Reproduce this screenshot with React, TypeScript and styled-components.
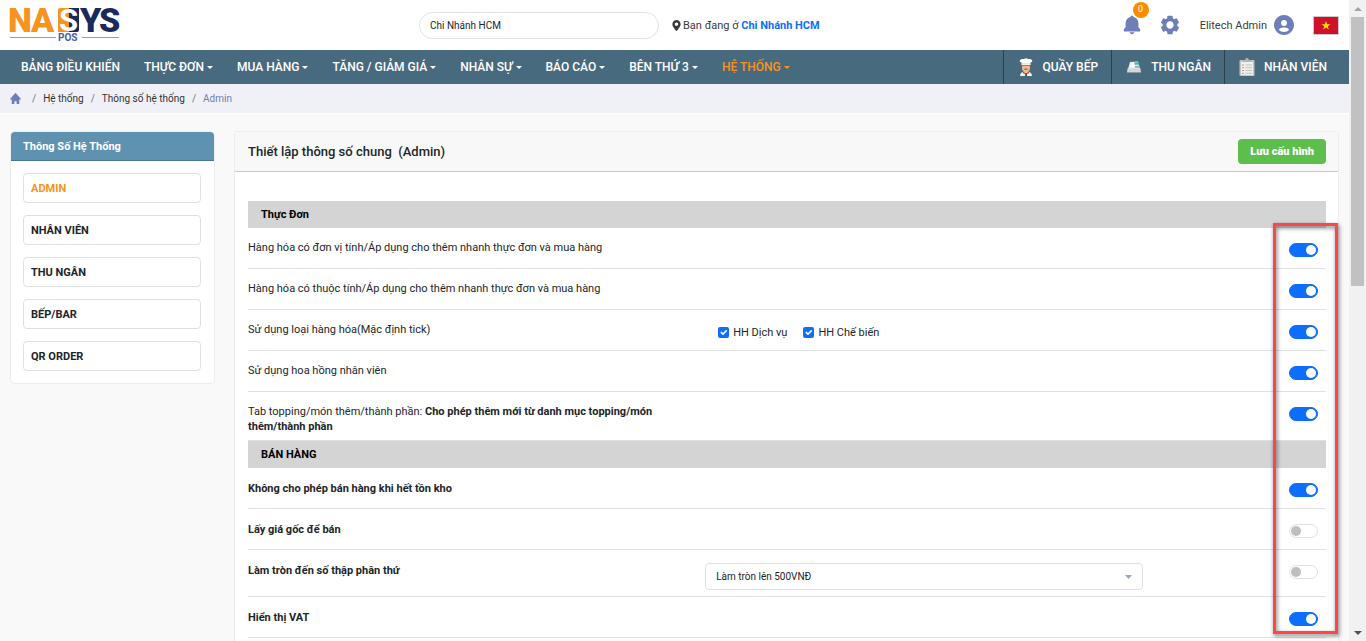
import React from "react";
import styled, { createGlobalStyle } from "styled-components";
import { BiSolidBell, BiSolidCog, BiSolidUserCircle, BiSolidHome } from "react-icons/bi";
import { FaMapMarkerAlt } from "react-icons/fa";

const ORANGE = "#f7931e";
const LINE = "#dee2e6";

const GlobalStyle = createGlobalStyle`
  *, *::before, *::after { box-sizing: border-box; }
  html, body { margin: 0; height: 100%; overflow: hidden; }
  body {
    font-family: Roboto, "Noto Sans", sans-serif;
    font-size: 11px;
    line-height: 15px;
    color: #212529;
    background: #f9f9f9;
  }
  input, select, button { font-family: inherit; color: inherit; margin: 0; }
  a { color: inherit; text-decoration: none; }
  svg { display: block; flex: none; }
`;

const Screen = styled.div`
  display: grid;
  grid-template-columns: minmax(0, 1fr) 17px;
  height: 100vh;
`;

const Page = styled.div`
  display: flex;
  flex-direction: column;
  min-width: 0;
  overflow: hidden;
`;

/* top bar */
const TopBar = styled.header`
  display: grid;
  grid-template-columns: 419px 240px 1fr auto;
  align-items: center;
  height: 50px;
  flex: none;
  padding-right: 10px;
  background: #fff;
`;

const LogoLink = styled.a`
  padding-left: 9px;
`;

const BranchInput = styled.input`
  width: 100%;
  height: 27px;
  padding: 0 10px;
  border: 1px solid ${LINE};
  border-radius: 14px;
  background: #fff;
  font-size: 10px;
  outline: none;
`;

const Location = styled.p`
  display: flex;
  align-items: center;
  gap: 1px;
  margin: 0 0 0 12px;
  color: #3b3b3b;
  strong { color: #0d6efd; }
`;

const Tools = styled.div`
  display: flex;
  align-items: center;
  color: #6d7fb6;
`;

const IconButton = styled.button`
  position: relative;
  display: flex;
  padding: 0;
  margin-right: 16px;
  border: 0;
  background: none;
  color: #6d7fb6;
`;

const Badge = styled.span`
  position: absolute;
  top: -12px;
  right: -6px;
  width: 16px;
  height: 16px;
  border-radius: 50%;
  background: #ff8c00;
  color: #fff;
  font-size: 9px;
  line-height: 15px;
  text-align: center;
`;

const Account = styled.button`
  display: flex;
  align-items: center;
  gap: 5px;
  padding: 0;
  margin: 0 17px 0 3px;
  border: 0;
  background: none;
  font-size: 11px;
  color: #3b3b3b;
  svg { color: #6d7fb6; }
`;

/* navigation */
const Nav = styled.nav`
  display: flex;
  justify-content: space-between;
  height: 34px;
  flex: none;
  background: #486a7f;
  color: #fff;
  font-size: 12px;
  font-weight: 500;
`;

const Menu = styled.div`
  display: flex;
  padding-left: 9px;
`;

const MenuLink = styled.a<{ $active?: boolean }>`
  display: flex;
  align-items: center;
  gap: 3px;
  padding: 0 12px;
  color: ${(p) => (p.$active ? ORANGE : "#fff")};
`;

const Caret = styled.span`
  border: 3px solid transparent;
  border-top-color: currentColor;
  border-bottom: 0;
`;

const Stations = styled.div`
  display: flex;
`;

const Station = styled.a`
  display: flex;
  align-items: center;
  gap: 8px;
  padding: 0 13px;
  border-left: 1px solid #2f3f49;
  &:last-child { padding-right: 22px; }
`;

const Crumbs = styled.ol`
  display: flex;
  align-items: center;
  height: 30px;
  flex: none;
  margin: 0;
  padding: 0 9px;
  list-style: none;
  background: #f0f1f6;
  border-bottom: 1px solid #fff;
  font-size: 10px;
  color: #333;
  li + li::before { content: "/"; padding: 0 7px; color: #6c757d; }
  li:nth-child(2)::before { padding-left: 10px; }
  li:first-child, li:last-child { color: #6d7fb6; }
`;

/* body */
const Body = styled.div`
  display: grid;
  grid-template-columns: 205px minmax(0, 1fr);
  gap: 19px;
  flex: 1;
  padding: 17px 10px 0;
  align-items: stretch;
`;

const SideCard = styled.aside`
  align-self: start;
  border: 1px solid #ececec;
  border-radius: 5px;
  background: #fff;
`;

const SideTitle = styled.h2`
  margin: 0;
  height: 29px;
  padding: 0 12px;
  border-bottom: 1px solid #48758f;
  border-radius: 4px 4px 0 0;
  background: #5f91b1;
  color: #fff;
  font-size: 11px;
  line-height: 29px;
`;

const SideList = styled.div`
  display: grid;
  gap: 12px;
  padding: 12px 13px 12px 12px;
`;

const SideLink = styled.a<{ $active?: boolean }>`
  height: 30px;
  padding: 0 7px;
  border: 1px solid ${LINE};
  border-radius: 4px;
  font-weight: 700;
  line-height: 29px;
  color: ${(p) => (p.$active ? ORANGE : "#212529")};
`;

const Card = styled.main`
  border: 1px solid #ececec;
  border-bottom: 0;
  border-radius: 4px 4px 0 0;
  background: #fff;
`;

const CardHead = styled.div`
  display: flex;
  align-items: center;
  justify-content: space-between;
  height: 40px;
  padding: 0 12px 0 13px;
  border-bottom: 1px solid #c8c8c8;
  background: #f8f8f8;
`;

const CardTitle = styled.h1`
  margin: 0;
  font-size: 13px;
  font-weight: 500;
  white-space: pre;
`;

const SaveButton = styled.button`
  height: 25px;
  padding: 0 12px;
  border: 0;
  border-radius: 4px;
  background: #5cbf4c;
  color: #fff;
  font-size: 11px;
  font-weight: 900;
`;

const Settings = styled.div`
  position: relative;
  margin: 29px 12px 0 13px;
`;

const Section = styled.h3`
  margin: 0;
  height: 27px;
  padding: 0 13px;
  background: #d4d4d4;
  color: #000;
  font-size: 11px;
  line-height: 27px;
`;

const Row = styled.div`
  display: grid;
  grid-template-columns: 5fr 5fr 2fr;
  align-items: start;
  min-height: 41px;
  border-bottom: 1px solid ${LINE};
`;

const RowLabel = styled.div<{ $bold?: boolean }>`
  padding: ${(p) => (p.$bold ? 13 : 12)}px 8px 6px 0;
  font-weight: ${(p) => (p.$bold ? 700 : 400)};
`;

const RowExtra = styled.div`
  padding: 13px 3px 6px 8px;
`;

const Checks = styled.div`
  display: flex;
  gap: 16px;
  padding: 2px 13px 0;
  label { display: flex; align-items: center; gap: 4px; }
`;

const CheckBox = styled.input`
  appearance: none;
  width: 11px;
  height: 11px;
  border-radius: 2px;
  border: 1px solid #bfbfbf;
  &:checked {
    border: 0;
    background: #0d6efd
      url("data:image/svg+xml,%3csvg xmlns='http://www.w3.org/2000/svg' viewBox='0 0 20 20'%3e%3cpath fill='none' stroke='%23fff' stroke-linecap='round' stroke-linejoin='round' stroke-width='3' d='m6 10 3 3 6-6'/%3e%3c/svg%3e");
  }
`;

const SelectWrap = styled.div`
  display: grid;
  align-items: center;
  select, svg { grid-area: 1 / 1; }
  svg { justify-self: end; margin-right: 11px; pointer-events: none; }
`;

const Select = styled.select`
  appearance: none;
  width: 100%;
  height: 27px;
  padding: 0 10px;
  border: 1px solid ${LINE};
  border-radius: 4px;
  background: #fff;
  font-size: 10px;
`;

const Switch = styled.input`
  appearance: none;
  display: flex;
  align-items: center;
  justify-self: end;
  width: 29px;
  height: 14px;
  margin: 15px 8px 0 0;
  padding: 0 1px;
  border: 1px solid ${LINE};
  border-radius: 7px;
  background: #fff;
  &::before {
    content: "";
    width: 10px;
    height: 10px;
    border-radius: 50%;
    background: #bfbfbf;
  }
  &:checked {
    justify-content: flex-end;
    border-color: #0d6efd;
    background: #0d6efd;
  }
  &:checked::before { background: #fff; }
`;

const Highlight = styled.div`
  position: absolute;
  top: 22px;
  bottom: 4px;
  right: -12px;
  width: 65px;
  border: 3px solid #ff4545;
  filter: drop-shadow(1px 2px 2px rgba(0, 0, 0, 0.55));
  pointer-events: none;
`;

/* scroll bar */
const Track = styled.div`
  display: flex;
  flex-direction: column;
  align-items: center;
  background: #f1f1f1;
`;

const Thumb = styled.div`
  width: 13px;
  height: 42%;
  background: #c1c1c1;
`;

const ScrollArrow = styled.span<{ $down?: boolean }>`
  display: flex;
  align-items: center;
  justify-content: center;
  height: 17px;
  margin-top: ${(p) => (p.$down ? "auto" : 0)};
  &::before {
    content: "";
    border: 4px solid transparent;
    ${(p) => (p.$down ? "border-top-color: #505050; border-bottom: 0;" : "border-bottom-color: #a3a3a3; border-top: 0;")}
  }
`;

const Logo = () => (
  <svg width="120" height="50" viewBox="0 -6 120 50" role="img" aria-label="NASYS POS">
    <path d="M51 2h9v24H49V4q0-2 2-2" fill={ORANGE} />
    <path d="M60 2h10v22q0 2-2 2h-8z" fill="#1b2a5b" />
    <g fontFamily="Roboto, sans-serif" fontWeight="900" fontSize="34">
      <text x="-1" y="26" fill={ORANGE}>N</text>
      <text x="22" y="26" fill={ORANGE}>A</text>
      <text x="71" y="26" fill="#1b2a5b">Y</text>
      <text x="90" y="26" fill="#1b2a5b">S</text>
    </g>
    <text x="50" y="25" fill="#fff" fontFamily="Roboto, sans-serif" fontWeight="700" fontSize="31">S</text>
    <path d="M1 31.500h46M73 31.500h37" stroke="#8f9db8" />
    <text x="49" y="35" fill="#3f62a8" fontFamily="Roboto, sans-serif" fontWeight="700" fontSize="10">POS</text>
  </svg>
);

const Flag = () => (
  <svg width="26" height="19" viewBox="0 0 26 19" role="img" aria-label="Việt Nam">
    <path d="M.5.5h25v18H.5z" fill="#d0112b" stroke="#c9c9c9" />
    <path d="m13 5 1.100 3.200h3.400l-2.700 2 1 3.300-2.800-2-2.800 2 1-3.300-2.700-2h3.400z" fill="#ffde00" />
  </svg>
);

const Chef = () => (
  <svg width="18" height="18" viewBox="0 0 18 20" preserveAspectRatio="none" aria-hidden="true">
    <path d="M3 20q0-5 6-5t6 5z" fill="#f4f0ec" />
    <path d="m6 15 3 2 3-2v2l-3 1-3-1z" fill="#c8402f" />
    <path d="M8 17h2v3H8z" fill="#7b4a3a" />
    <path d="M5 7h8v5q-1 4-4 4t-4-4z" fill="#f2b98a" />
    <path d="M4.500 7h9v3l-1-1h-7l-1 1z" fill="#7a4b32" />
    <path d="M6.500 12.500q2.500-1.500 5 0-2.500 1-5 0" fill="#8a5538" />
    <path d="M4.500 8V5Q2 4.500 3 2.500T7 1.200Q9-.6 11 1.200q3-.7 4 1.300T13.500 5v3z" fill="#fff" />
    <path d="M5 6.500h8" stroke="#d8d8d8" />
  </svg>
);

const Register = () => (
  <svg width="18" height="20" viewBox="0 0 18 20" aria-hidden="true">
    <path d="m5 5 8-.500 2 7.500H3z" fill="#e9edef" />
    <path d="M6.500 6h2.500v4H6z" fill="#fff" />
    <path d="m9.500 5.500 4-.300.800 2.300-4.500.300z" fill="#35b6a4" />
    <path d="m10 9 4.500-.200.500 2H10z" fill="#9ea9ae" />
    <path d="M2.500 11.500h13l.500 4H2z" fill="#d3d8da" />
    <path d="M2 15h14v1H2z" fill="#8e989d" />
  </svg>
);

const Clipboard = () => (
  <svg width="18" height="20" viewBox="0 0 18 20" aria-hidden="true">
    <rect x="1.500" y="3" width="15" height="16" rx="1" fill="#c4c4c0" />
    <path d="M3 5h12v13H3z" fill="#f0f0ee" />
    <path d="M5 5V3h2q.3-2 2-2t2 2h2v2z" fill="#b3b5b5" />
    <path d="M4 8h2M4 13.500h2" stroke="#d98a86" />
    <path d="M4 10.700h2M4 16.300h2" stroke="#8fb79a" />
    <path d="M7.500 8H14M7.500 10.700H14M7.500 13.500H14M7.500 16.300H14" stroke="#bfc3c3" />
  </svg>
);

const MENU = [
  { text: "BẢNG ĐIỀU KHIỂN", plain: true },
  { text: "THỰC ĐƠN" },
  { text: "MUA HÀNG" },
  { text: "TĂNG / GIẢM GIÁ" },
  { text: "NHÂN SỰ" },
  { text: "BÁO CÁO" },
  { text: "BÊN THỨ 3" },
  { text: "HỆ THỐNG", active: true },
];

const SIDE = ["ADMIN", "NHÂN VIÊN", "THU NGÂN", "BẾP/BAR", "QR ORDER"];

type SettingProps = {
  id: string;
  label: React.ReactNode;
  bold?: boolean;
  on?: boolean;
  children?: React.ReactNode;
};

const Setting = ({ id, label, bold, on, children }: SettingProps) => (
  <Row>
    <RowLabel $bold={bold}>
      <label htmlFor={id}>{label}</label>
    </RowLabel>
    {children ? <RowExtra>{children}</RowExtra> : <span />}
    <Switch id={id} type="checkbox" role="switch" defaultChecked={on} />
  </Row>
);

export default function App() {
  return (
    <Screen>
      <GlobalStyle />
      <Page>
        <TopBar>
          <LogoLink href="#"><Logo /></LogoLink>
          <BranchInput aria-label="Chi nhánh" defaultValue="Chi Nhánh HCM" />
          <Location>
            <FaMapMarkerAlt size={11} />
            <span>Bạn đang ở <strong>Chi Nhánh HCM</strong></span>
          </Location>
          <Tools>
            <IconButton aria-label="Thông báo">
              <BiSolidBell size={22} />
              <Badge>0</Badge>
            </IconButton>
            <IconButton aria-label="Cài đặt"><BiSolidCog size={22} /></IconButton>
            <Account>Elitech Admin <BiSolidUserCircle size={24} /></Account>
            <Flag />
          </Tools>
        </TopBar>
        <Nav>
          <Menu>
            {MENU.map((m) => (
              <MenuLink key={m.text} href="#" $active={m.active}>
                {m.text}
                {!m.plain && <Caret />}
              </MenuLink>
            ))}
          </Menu>
          <Stations>
            <Station href="#"><Chef />QUẦY BẾP</Station>
            <Station href="#"><Register />THU NGÂN</Station>
            <Station href="#"><Clipboard />NHÂN VIÊN</Station>
          </Stations>
        </Nav>
        <Crumbs>
          <li><a href="#" aria-label="Trang chủ"><BiSolidHome size={13} /></a></li>
          <li><a href="#">Hệ thống</a></li>
          <li><a href="#">Thông số hệ thống</a></li>
          <li>Admin</li>
        </Crumbs>
        <Body>
          <SideCard>
            <SideTitle>Thông Số Hệ Thống</SideTitle>
            <SideList>
              {SIDE.map((s, i) => (
                <SideLink key={s} href="#" $active={i === 0}>{s}</SideLink>
              ))}
            </SideList>
          </SideCard>
          <Card>
            <CardHead>
              <CardTitle>{"Thiết lập thông số chung  (Admin)"}</CardTitle>
              <SaveButton>Lưu cấu hình</SaveButton>
            </CardHead>
            <Settings>
              <Section>Thực Đơn</Section>
              <Setting id="unit" on label="Hàng hóa có đơn vị tính/Áp dụng cho thêm nhanh thực đơn và mua hàng" />
              <Setting id="attr" on label="Hàng hóa có thuộc tính/Áp dụng cho thêm nhanh thực đơn và mua hàng" />
              <Setting id="kind" on label="Sử dụng loại hàng hóa(Mặc định tick)">
                <Checks>
                  <label><CheckBox type="checkbox" defaultChecked />HH Dịch vụ</label>
                  <label><CheckBox type="checkbox" defaultChecked />HH Chế biến</label>
                </Checks>
              </Setting>
              <Setting id="rose" on label="Sử dụng hoa hồng nhân viên" />
              <Setting
                id="topping"
                on
                label={<>Tab topping/món thêm/thành phần: <b>Cho phép thêm mới từ danh mục topping/món thêm/thành phần</b></>}
              />
              <Section>BÁN HÀNG</Section>
              <Setting id="stock" bold on label="Không cho phép bán hàng khi hết tồn kho" />
              <Setting id="origin" bold label="Lấy giá gốc để bán" />
              <Setting id="round" bold label="Làm tròn đến số thập phân thứ">
                <SelectWrap>
                  <Select aria-label="Làm tròn">
                    <option>Làm tròn lên 500VNĐ</option>
                  </Select>
                  <svg width="7" height="4" viewBox="0 0 7 4" aria-hidden="true">
                    <path d="M0 0h7L3.500 4z" fill="#98a6c0" />
                  </svg>
                </SelectWrap>
              </Setting>
              <Setting id="vat" bold on label="Hiển thị VAT" />
              <Highlight />
            </Settings>
          </Card>
        </Body>
      </Page>
      <Track aria-hidden="true">
        <ScrollArrow />
        <Thumb />
        <ScrollArrow $down />
      </Track>
    </Screen>
  );
}
